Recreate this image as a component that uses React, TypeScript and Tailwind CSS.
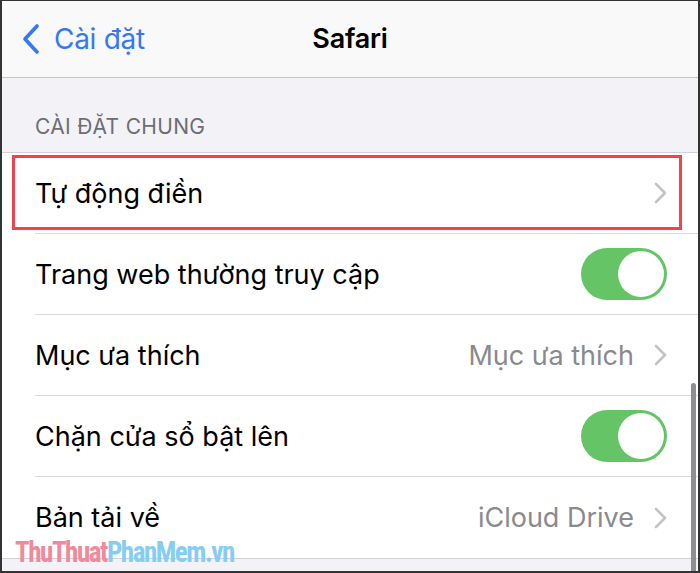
import React from 'react';

const font = { fontFamily: 'Inter, "Noto Sans", sans-serif' };

const Chevron: React.FC = () => (
  <svg width="13" height="22" viewBox="0 0 13 22" fill="none" className="shrink-0">
    <path d="M2 2l9 9-9 9" stroke="#c4c4c7" strokeWidth={2.6} strokeLinecap="round" strokeLinejoin="round" />
  </svg>
);

const Toggle: React.FC = () => (
  <div className="w-[86px] h-[52px] rounded-full bg-[#65c466] flex items-center justify-end p-[3px] shrink-0">
    <div className="w-[46px] h-[46px] rounded-full bg-white" />
  </div>
);

interface RowProps {
  label: string;
  value?: string;
  toggle?: boolean;
  last?: boolean;
}

const Row: React.FC<RowProps> = ({ label, value, toggle, last }) => (
  <div className="pl-[33px] bg-white">
    <div className={`h-[81px] flex items-center pr-[31px] ${last ? '' : 'border-b border-[#d9d9dc]'}`}>
      <span className="flex-1 text-[27px] text-black pt-[2px]">{label}</span>
      {value && <span className="text-[27px] text-[#8a8a8e] mr-[20px] pt-[2px]">{value}</span>}
      {toggle ? <Toggle /> : <Chevron />}
    </div>
  </div>
);

export default function App() {
  return (
    <div
      className="relative w-[700px] h-[573px] overflow-hidden bg-[#f2f2f7] border-l-2 border-t border-r-2 border-b-2 border-[#333]"
      style={font}
    >
      {/* nav bar */}
      <div className="h-[77px] bg-[#f9f9f9] border-b border-[#c6c6c8] relative flex items-center">
        <div className="flex items-center pl-[19px] gap-[13px] text-[#3478f6]">
          <svg width="20" height="32" viewBox="0 0 20 32" fill="none">
            <path d="M16 3L4 16l12 13" stroke="#3478f6" strokeWidth={3.6} strokeLinecap="round" strokeLinejoin="round" />
          </svg>
          <span className="text-[28px] tracking-[-0.3px]">Cài đặt</span>
        </div>
        <span className="absolute left-1/2 -translate-x-1/2 text-[27px] font-semibold text-black tracking-[-0.2px]">
          Safari
        </span>
      </div>

      {/* section header */}
      <div className="h-[75px] flex items-end pl-[33px] pb-[10px] border-b border-[#d1d1d6]">
        <span className="text-[21px] text-[#6d6d72] tracking-[0.3px]">CÀI ĐẶT CHUNG</span>
      </div>

      <div className="border-b border-[#d1d1d6]">
        <div className="relative">
          <Row label="Tự động điền" />
          <div className="absolute left-[10px] top-[2px] w-[670px] h-[75px] border-[3px] border-[#f3424b] pointer-events-none" />
        </div>
        <Row label="Trang web thường truy cập" toggle />
        <Row label="Mục ưa thích" value="Mục ưa thích" />
        <Row label="Chặn cửa sổ bật lên" toggle />
        <Row label="Bản tải về" value="iCloud Drive" last />
      </div>

      {/* scroll indicator */}
      <div className="absolute right-[2px] top-[382px] w-[5px] h-[190px] rounded-full bg-[#8e8e93]" />

      {/* watermark */}
      <div
        className="absolute left-[13px] bottom-[4px] text-[30px] font-bold tracking-[-1.6px] leading-none origin-left scale-x-[0.9]"
        style={{ fontFamily: '"Liberation Sans Narrow", "Roboto Condensed", Roboto, sans-serif' }}
      >
        <span className="text-[#f2899a]">ThuThuat</span>
        <span className="text-[#86cdf3]">PhanMem.vn</span>
      </div>
    </div>
  );
}
